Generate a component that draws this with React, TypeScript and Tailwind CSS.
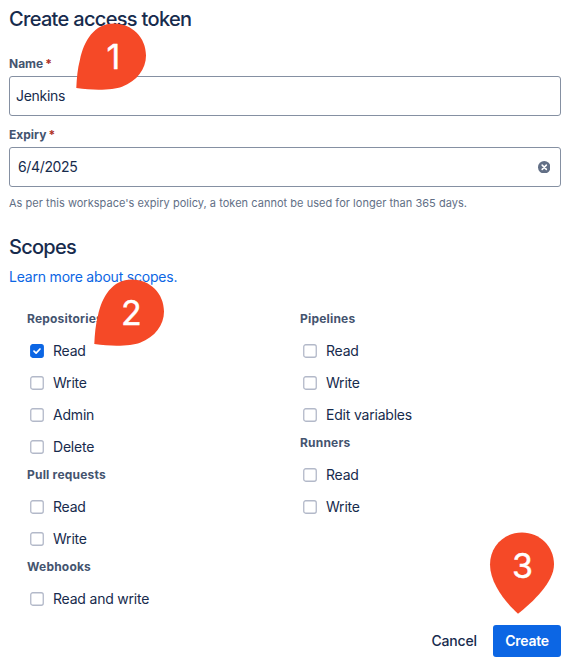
import React from 'react';

type Scope = { label: string; checked?: boolean };
type Group = { title: string; scopes: Scope[] };

const left: Group[] = [
  {
    title: 'Repositories',
    scopes: [{ label: 'Read', checked: true }, { label: 'Write' }, { label: 'Admin' }, { label: 'Delete' }],
  },
  { title: 'Pull requests', scopes: [{ label: 'Read' }, { label: 'Write' }] },
  { title: 'Webhooks', scopes: [{ label: 'Read and write' }] },
];

const right: Group[] = [
  { title: 'Pipelines', scopes: [{ label: 'Read' }, { label: 'Write' }, { label: 'Edit variables' }] },
  { title: 'Runners', scopes: [{ label: 'Read' }, { label: 'Write' }] },
];

function Checkbox({ checked }: { checked?: boolean }) {
  return (
    <svg className="ml-[3px] size-[14px] shrink-0" viewBox="0 0 14 14" fill="none">
      <rect
        x="0.75"
        y="0.75"
        width="12.5"
        height="12.5"
        rx="2"
        fill={checked ? '#0c66e4' : '#fff'}
        stroke={checked ? '#0c66e4' : '#b3b9c9'}
        strokeWidth="1.3"
      />
      {checked && (
        <path d="M4 7.2L6.1 9.2L10 5" stroke="#fff" strokeWidth="1.7" strokeLinecap="round" strokeLinejoin="round" />
      )}
    </svg>
  );
}

function ScopeColumn({ groups }: { groups: Group[] }) {
  return (
    <div className="flex w-[273px] shrink-0 flex-col">
      {groups.map((group) => (
        <section key={group.title}>
          <h3 className="mb-1 h-6 text-[12px] leading-6 font-bold tracking-[0.2px] text-[#44546f]">{group.title}</h3>
          {group.scopes.map((scope) => (
            <label key={scope.label} className="flex h-8 items-center">
              <Checkbox checked={scope.checked} />
              <span className="ml-[9px] text-[14px] leading-5 tracking-[-0.2px]">{scope.label}</span>
            </label>
          ))}
        </section>
      ))}
    </div>
  );
}

function FieldLabel({ children }: { children: string }) {
  return (
    <div className="flex h-4 gap-[2px] text-[12px] leading-4 font-bold text-[#44546f]">
      <span>{children}</span>
      <span className="text-[#ae2e24]">*</span>
    </div>
  );
}

function Marker({ number, className, path }: { number: string; className: string; path: string }) {
  return (
    <div className={`absolute ${className}`}>
      <svg className="size-full" viewBox="0 0 70 82" fill="#f54927">
        <path d={path} />
        <text x="37.4" y="46" fill="#fff" stroke="#fff" strokeWidth="0.4" textAnchor="middle" fontFamily="Inter, sans-serif" fontSize="34">
          {number}
        </text>
      </svg>
    </div>
  );
}

const sideDrop =
  'M0.3 65C0.8 55 1.5 46 4 36.5C8 18 18 0.5 38 0.5C56 0.5 70 14.5 70 32.5C70 46 61 58 46 63.7C37 66.8 20 67.8 0.3 65Z';
const downDrop =
  'M33 81.7C22 72 5 52 5 32.5C5 14.5 19 0.5 37 0.5C55 0.5 69 14.5 69 32.5C69 50 48 70 33 81.7Z';

export default function App() {
  return (
    <main className="relative h-[672px] w-[574px] overflow-hidden bg-white pt-[7px] pr-[13px] pl-[9px] font-['Inter','Liberation_Sans',sans-serif] text-[#172b4d]">
      <h1 className="text-[20px] leading-6 font-medium tracking-[-0.68px]">Create access token</h1>
      <div className="mt-[25px]">
        <FieldLabel>Name</FieldLabel>
        <div className="mt-1 flex h-10 items-center rounded-[3px] border border-[#8590a2] px-[6px] pb-[2px] text-[14px] tracking-[-0.3px]">
          Jenkins
        </div>
      </div>
      <div className="mt-[11px]">
        <FieldLabel>Expiry</FieldLabel>
        <div className="mt-1 flex h-10 items-center justify-between rounded-[3px] border border-[#8590a2] pr-[10px] pl-2 text-[14px] tracking-[-0.35px]">
          <span className="pb-[2px]">6/4/2025</span>
          <svg className="size-[12.5px]" viewBox="0 0 12 12">
            <circle cx="6" cy="6" r="6" fill="#626f86" />
            <path d="M4 4L8 8M8 4L4 8" stroke="#fff" strokeWidth="1.5" strokeLinecap="round" />
          </svg>
        </div>
      </div>
      <p className="mt-2 text-[11px] leading-4 tracking-[0.03px] text-[#626f86]">
        As per this workspace's expiry policy, a token cannot be used for longer than 365 days.
      </p>
      <h2 className="mt-6 text-[20px] leading-6 font-medium tracking-[-0.75px]">Scopes</h2>
      <a className="mt-2 block text-[14px] leading-5 tracking-[-0.2px] text-[#0c66e4]">Learn more about scopes.</a>
      <div className="mt-5 flex pl-[18px]">
        <ScopeColumn groups={left} />
        <ScopeColumn groups={right} />
      </div>
      <div className="mt-[10px] flex h-8 items-center justify-end gap-4 text-[14px] font-medium tracking-[-0.15px]">
        <button className="pb-[2px]">Cancel</button>
        <button className="h-8 w-[68px] rounded-[3px] bg-[#0c66e4] pb-[2px] font-semibold tracking-[-0.3px] text-white">
          Create
        </button>
      </div>
      <Marker number="1" className="top-[23px] left-[76px] h-[82px] w-[70px]" path={sideDrop} />
      <Marker number="2" className="top-[279px] left-[94px] h-[82px] w-[70px]" path={sideDrop} />
      <Marker number="3" className="top-[532px] left-[485px] h-[82px] w-[70px]" path={downDrop} />
    </main>
  );
}
